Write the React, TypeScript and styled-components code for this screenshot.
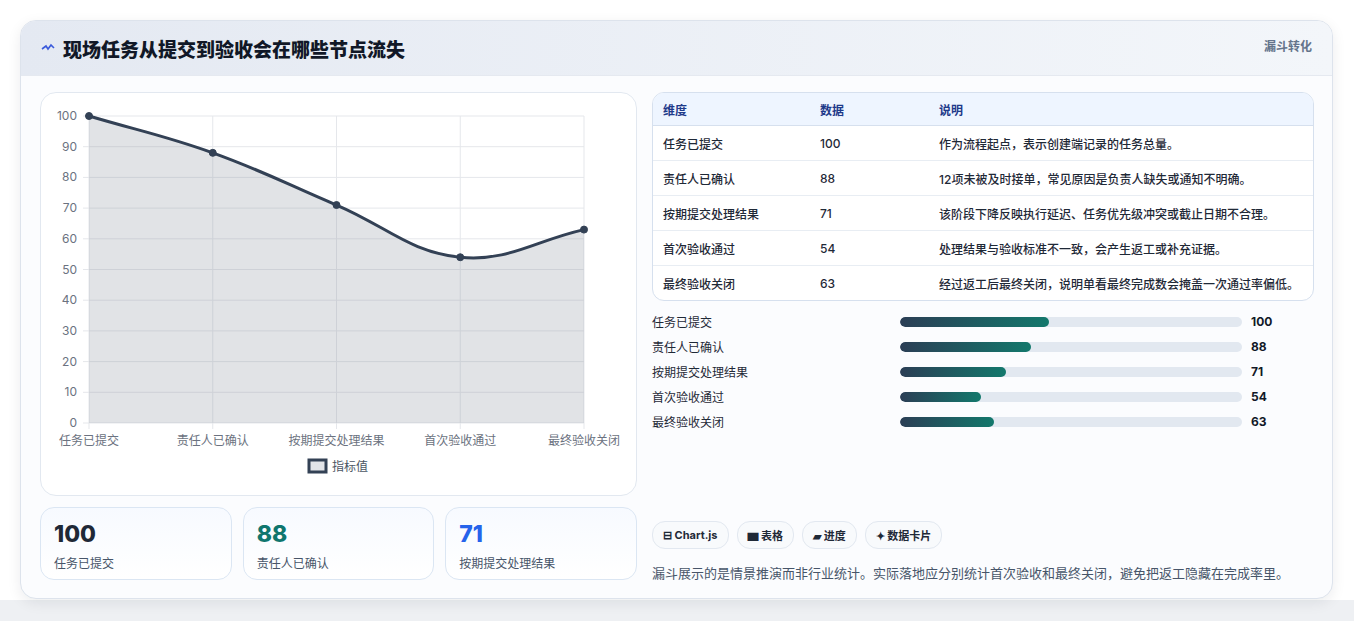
import React from 'react'
import styled, { createGlobalStyle } from 'styled-components'

const Global = createGlobalStyle`
  body { margin: 0; background: #f3f4f6; font-family: Inter, "Noto Sans CJK SC", sans-serif; }
`

const Page = styled.div`
  width: 1354px;
  height: 621px;
  padding: 20px 20px 0 20px;
  box-sizing: border-box;
  background: linear-gradient(#ffffff, #ffffff 600px, #eef0f3 600px);
`

const Card = styled.div`
  width: 1313px;
  height: 579px;
  box-sizing: border-box;
  background: #fbfcfe;
  border: 1px solid #dde3ec;
  border-radius: 16px;
  box-shadow: 0 4px 14px rgba(15, 23, 42, 0.08);
  overflow: hidden;
`

const Header = styled.div`
  height: 54px;
  display: flex;
  align-items: center;
  justify-content: space-between;
  padding: 0 20px 0 20px;
  background: linear-gradient(90deg, #e4e9f2, #f3f6fa);
  border-bottom: 1px solid #e5e9f0;
`

const Title = styled.h1`
  margin: 0;
  font-size: 19px;
  font-weight: 800;
  color: #111827;
  display: flex;
  align-items: center;
  gap: 8px;
`

const Tag = styled.span`
  font-size: 12px;
  font-weight: 700;
  color: #64748b;
  align-self: flex-start;
  margin-top: 16px;
`

const Body = styled.div`
  display: grid;
  grid-template-columns: 597px 662px;
  gap: 15px;
  padding: 16px 19px 0 19px;
`

const Col = styled.div`
  display: flex;
  flex-direction: column;
`

const ChartCard = styled.div`
  height: 404px;
  box-sizing: border-box;
  border: 1px solid #e2e8f0;
  border-radius: 16px;
  background: #fff;
`

const Stats = styled.div`
  display: grid;
  grid-template-columns: repeat(3, 1fr);
  gap: 11px;
  margin-top: 11px;
`

const Stat = styled.div`
  height: 73px;
  box-sizing: border-box;
  border: 1px solid #dbe6f3;
  border-radius: 14px;
  background: linear-gradient(#f7faff, #ffffff);
  padding: 12px 13px;
`

const StatNum = styled.div<{ $c: string }>`
  font-size: 23px;
  font-weight: 800;
  color: ${p => p.$c};
  line-height: 28px;
`

const StatLabel = styled.div`
  font-size: 12px;
  color: #475569;
  margin-top: 6px;
`

const Table = styled.table`
  width: 100%;
  border-collapse: separate;
  border-spacing: 0;
  border: 1px solid #d6e0ee;
  border-radius: 12px;
  overflow: hidden;
  font-size: 12px;
  background: #fff;
`

const Th = styled.th`
  text-align: left;
  font-weight: 700;
  color: #1e3a8a;
  background: #eef5ff;
  height: 32px;
  padding: 0 10px;
  border-bottom: 1px solid #d6e0ee;
`

const Td = styled.td`
  height: 34px;
  padding: 0 10px;
  color: #1f2937;
  font-weight: 500;
  border-top: 1px solid #e8edf3;
  tr:first-child > & { border-top: none; }
`

const Bars = styled.div`
  display: flex;
  flex-direction: column;
  gap: 9px;
  margin-top: 12px;
`

const BarRow = styled.div`
  display: grid;
  grid-template-columns: 239px 342px 1fr;
  align-items: center;
  gap: 9px;
  height: 16px;
  font-size: 12px;
  color: #1f2937;
`

const Track = styled.div`
  height: 10px;
  border-radius: 5px;
  background: #e2e8f0;
  overflow: hidden;
`

const Fill = styled.div`
  height: 100%;
  border-radius: 5px;
  background: linear-gradient(90deg, #2b3e55, #13786c);
`

const BarVal = styled.span`
  font-weight: 700;
  color: #111827;
`

const Chips = styled.div`
  display: flex;
  gap: 8px;
  margin-top: 92px;
`

const Chip = styled.span`
  height: 26px;
  padding: 0 10px;
  display: inline-flex;
  align-items: center;
  gap: 4px;
  border: 1px solid #e2e8f0;
  border-radius: 13px;
  background: #f8fafc;
  font-size: 11px;
  font-weight: 700;
  color: #1f2937;
`

const Note = styled.p`
  margin: 14px 0 0;
  font-size: 13px;
  color: #475569;
`

const labels = ['任务已提交', '责任人已确认', '按期提交处理结果', '首次验收通过', '最终验收关闭']
const values = [100, 88, 71, 54, 63]
const notes = [
  '作为流程起点，表示创建端记录的任务总量。',
  '12项未被及时接单，常见原因是负责人缺失或通知不明确。',
  '该阶段下降反映执行延迟、任务优先级冲突或截止日期不合理。',
  '处理结果与验收标准不一致，会产生返工或补充证据。',
  '经过返工后最终关闭，说明单看最终完成数会掩盖一次通过率偏低。',
]

const X0 = 48, X1 = 543, Y0 = 23, Y1 = 330
const pts = values.map((v, i) => ({ x: X0 + (i * (X1 - X0)) / 4, y: Y1 - (v / 100) * (Y1 - Y0) }))

function spline() {
  const t = 0.4
  const cps = pts.map((cur, i) => {
    const prev = pts[i - 1] || cur
    const next = pts[i + 1] || cur
    const d01 = Math.hypot(cur.x - prev.x, cur.y - prev.y)
    const d12 = Math.hypot(next.x - cur.x, next.y - cur.y)
    const s = d01 + d12 || 1
    const fa = (d01 / s) * t, fb = (d12 / s) * t
    return {
      p: { x: cur.x - fa * (next.x - prev.x), y: cur.y - fa * (next.y - prev.y) },
      n: { x: cur.x + fb * (next.x - prev.x), y: cur.y + fb * (next.y - prev.y) },
    }
  })
  let d = `M${pts[0].x},${pts[0].y}`
  for (let i = 1; i < pts.length; i++) {
    const a = cps[i - 1].n, b = cps[i].p
    d += ` C${a.x},${Math.max(Y0, a.y)} ${b.x},${b.y} ${pts[i].x},${pts[i].y}`
  }
  return d
}

function Chart() {
  const line = spline()
  const area = `${line} L${X1},${Y1} L${X0},${Y1} Z`
  const font = 'Inter, "Noto Sans CJK SC", sans-serif'
  return (
    <svg width="595" height="402" style={{ display: 'block' }}>
      {Array.from({ length: 11 }, (_, i) => {
        const y = Y1 - (i * (Y1 - Y0)) / 10
        return (
          <g key={i}>
            <line x1={X0 - 6} x2={X1} y1={y} y2={y} stroke="#e5e7eb" />
            <text x={X0 - 12} y={y + 4} textAnchor="end" fontSize="12" fill="#6b7280" fontFamily={font}>{i * 10}</text>
          </g>
        )
      })}
      {pts.map((p, i) => (
        <g key={i}>
          <line x1={p.x} x2={p.x} y1={Y0} y2={Y1 + 6} stroke="#e5e7eb" />
          <text x={p.x} y={352} textAnchor="middle" fontSize="12" fill="#6b7280" fontFamily={font}>{labels[i]}</text>
        </g>
      ))}
      <path d={area} fill="rgba(148,155,165,0.28)" />
      <path d={line} fill="none" stroke="#334155" strokeWidth="3" />
      {pts.map((p, i) => (
        <circle key={i} cx={p.x} cy={p.y} r="3.5" fill="#334155" stroke="#334155" />
      ))}
      <rect x="268" y="367" width="17" height="12" fill="#e2e4e8" stroke="#334155" strokeWidth="3" />
      <text x="291" y="378" fontSize="12" fill="#4b5563" fontFamily={font}>指标值</text>
    </svg>
  )
}

export default function App() {
  return (
    <Page>
      <Global />
      <Card>
        <Header>
          <Title>
            <svg width="14" height="10" viewBox="0 0 14 10">
              <path d="M1 6 L5 3 L7 6 L10 2 L13 5" fill="none" stroke="#3b5bdb" strokeWidth="1.6" />
            </svg>
            现场任务从提交到验收会在哪些节点流失
          </Title>
          <Tag>漏斗转化</Tag>
        </Header>
        <Body>
          <Col>
            <ChartCard>
              <Chart />
            </ChartCard>
            <Stats>
              <Stat><StatNum $c="#1f2937">100</StatNum><StatLabel>任务已提交</StatLabel></Stat>
              <Stat><StatNum $c="#0f766e">88</StatNum><StatLabel>责任人已确认</StatLabel></Stat>
              <Stat><StatNum $c="#2563eb">71</StatNum><StatLabel>按期提交处理结果</StatLabel></Stat>
            </Stats>
          </Col>
          <Col>
            <Table>
              <thead>
                <tr><Th style={{ width: 137 }}>维度</Th><Th style={{ width: 99 }}>数据</Th><Th>说明</Th></tr>
              </thead>
              <tbody>
                {labels.map((l, i) => (
                  <tr key={l}><Td>{l}</Td><Td>{values[i]}</Td><Td>{notes[i]}</Td></tr>
                ))}
              </tbody>
            </Table>
            <Bars>
              {labels.map((l, i) => (
                <BarRow key={l}>
                  <span>{l}</span>
                  <Track><Fill style={{ width: `${values[i] * 0.436}%` }} /></Track>
                  <BarVal>{values[i]}</BarVal>
                </BarRow>
              ))}
            </Bars>
            <Chips>
              <Chip>⊟ Chart.js</Chip>
              <Chip>▆ 表格</Chip>
              <Chip>▰ 进度</Chip>
              <Chip>✦ 数据卡片</Chip>
            </Chips>
            <Note>漏斗展示的是情景推演而非行业统计。实际落地应分别统计首次验收和最终关闭，避免把返工隐藏在完成率里。</Note>
          </Col>
        </Body>
      </Card>
    </Page>
  )
}
